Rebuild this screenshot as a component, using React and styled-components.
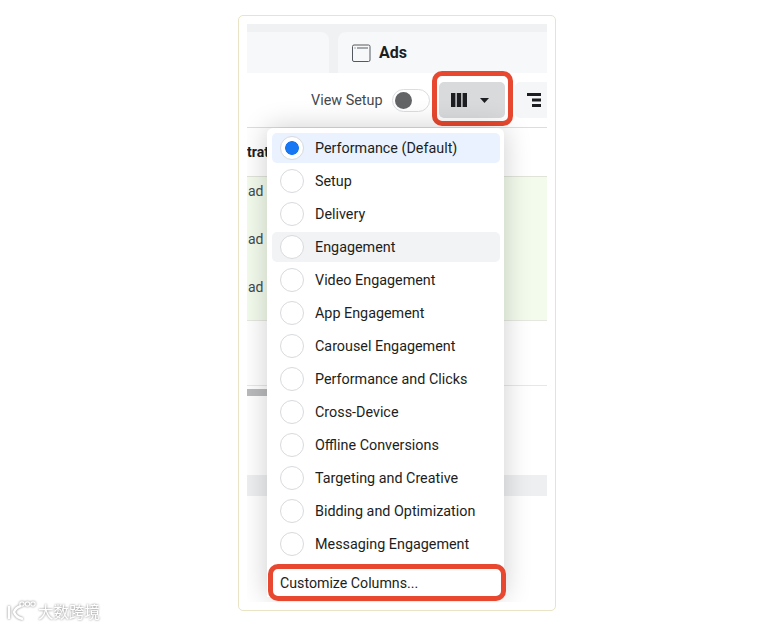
import React from 'react';
import styled, { createGlobalStyle } from 'styled-components';

const ITEMS = [
  'Performance (Default)',
  'Setup',
  'Delivery',
  'Engagement',
  'Video Engagement',
  'App Engagement',
  'Carousel Engagement',
  'Performance and Clicks',
  'Cross-Device',
  'Offline Conversions',
  'Targeting and Creative',
  'Bidding and Optimization',
  'Messaging Engagement',
];

const App = () => {
  return (
    <Page>
      <GlobalStyle />
      <Frame>
        <Screen>
          <TabBar>
            <Tab $width={82} />
            <Tab $grow>
              <svg width="20" height="20" viewBox="0 0 20 20" fill="none">
                <rect x="1.5" y="2" width="17.5" height="16.5" rx="1.5" stroke="#55595f" strokeWidth="1" />
                <path d="M3.5 5h1M6 5h11" stroke="#55595f" strokeWidth="1" />
              </svg>
              <TabLabel>Ads</TabLabel>
            </Tab>
          </TabBar>
          <Toolbar>
            <ToggleLabel>View Setup</ToggleLabel>
            <Toggle>
              <Knob />
            </Toggle>
            <ColumnsButton>
              <svg width="16" height="14" viewBox="0 0 16 14" fill="#1c1e21">
                <rect x="0" y="0" width="4.4" height="14" />
                <rect x="5.8" y="0" width="4.4" height="14" />
                <rect x="11.6" y="0" width="4.4" height="14" />
              </svg>
              <svg width="9" height="5" viewBox="0 0 9 5" fill="#1c1e21">
                <path d="M0 0h9L4.5 5z" />
              </svg>
            </ColumnsButton>
            <BreakdownButton>
              <svg width="14" height="14" viewBox="0 0 14 14" fill="#1c1e21">
                <rect x="0" y="0" width="14" height="3" />
                <rect x="5" y="5.5" width="9" height="3" />
                <rect x="5" y="11" width="9" height="3" />
              </svg>
            </BreakdownButton>
          </Toolbar>
          <TableHead>
            <HeadText>trat</HeadText>
          </TableHead>
          <GreenRows>
            <CellText>ad</CellText>
            <CellText>ad</CellText>
            <CellText>ad</CellText>
          </GreenRows>
          <Spacer $height={64} />
          <ScrollTrack>
            <ScrollThumb />
          </ScrollTrack>
          <Spacer $height={79} />
          <FooterBand />
          <Menu>
            {ITEMS.map((v, i) => (
              <MenuItem key={i} $selected={i === 0} $hover={i === 3}>
                <Radio $checked={i === 0} />
                <span>{v}</span>
              </MenuItem>
            ))}
            <Customize>Customize Columns...</Customize>
          </Menu>
        </Screen>
      </Frame>
      <Watermark>
        <svg width="32" height="24" viewBox="0 0 32 24" fill="none" stroke="#fff" strokeWidth="2.4">
          <path d="M3 7v13" />
          <path d="M15 7c-4 1-6 3-7 6 1 3 4 6 9 7" />
          <g strokeWidth="1.2">
            <circle cx="16" cy="5" r="2.2" />
            <circle cx="21.5" cy="5" r="2.2" />
            <circle cx="27" cy="5" r="2.2" />
          </g>
        </svg>
        <WatermarkText>大数跨境</WatermarkText>
      </Watermark>
    </Page>
  );
};

export default App;

const GlobalStyle = createGlobalStyle`
  body {
    margin: 0;
    background: #fff;
    font-family: Roboto, "Liberation Sans", sans-serif;
  }
`;
const Page = styled.div`
  position: relative;
  width: 773px;
  height: 627px;
  padding: 15px 0 0 238px;
  box-sizing: border-box;
  overflow: hidden;
`;
const Frame = styled.div`
  box-sizing: border-box;
  width: 318px;
  height: 596px;
  padding: 8px 8px 8px;
  border: 1px solid #e9e4c6;
  border-radius: 5px;
`;
const Screen = styled.div`
  position: relative;
  display: flex;
  flex-direction: column;
  width: 300px;
  height: 578px;
  overflow: hidden;
  background: #fff;
`;
const TabBar = styled.div`
  display: flex;
  gap: 9px;
  height: 49px;
  flex: none;
  padding-top: 8px;
  box-sizing: border-box;
  background: #f0f1f3;
`;
const Tab = styled.div`
  display: flex;
  align-items: center;
  gap: 8px;
  padding-left: 13px;
  box-sizing: border-box;
  background: #f7f8fa;
  width: ${(p) => (p.$width ? `${p.$width}px` : 'auto')};
  flex-grow: ${(p) => (p.$grow ? 1 : 0)};
  border-radius: ${(p) => (p.$grow ? '8px 0 0 0' : '0 8px 0 0')};
`;
const TabLabel = styled.span`
  font-size: 16px;
  font-weight: 700;
  color: #1c1e21;
`;
const Toolbar = styled.div`
  display: flex;
  align-items: center;
  height: 55px;
  flex: none;
  box-sizing: border-box;
  border-bottom: 1px solid #dadde1;
`;
const ToggleLabel = styled.span`
  margin-left: 64px;
  width: 72px;
  font-size: 14.4px;
  color: #444950;
  white-space: nowrap;
`;
const Toggle = styled.div`
  display: flex;
  align-items: center;
  margin-left: 9px;
  width: 38px;
  height: 23px;
  padding-left: 2px;
  box-sizing: border-box;
  border: 1px solid #dadde1;
  border-radius: 12px;
  background: #fff;
`;
const Knob = styled.div`
  width: 17px;
  height: 17px;
  border-radius: 50%;
  background: #636466;
`;
const ColumnsButton = styled.div`
  position: relative;
  display: flex;
  align-items: center;
  justify-content: center;
  gap: 13px;
  flex: none;
  margin-left: 9px;
  width: 66px;
  height: 36px;
  padding-right: 4px;
  box-sizing: border-box;
  border-radius: 5px;
  background: #d9dadc;

  &::after {
    content: '';
    position: absolute;
    inset: -11px -8px -8px -7px;
    border: 5px solid #e8482f;
    border-radius: 10px;
  }
`;
const BreakdownButton = styled.div`
  display: flex;
  align-items: center;
  flex: none;
  margin-left: 10px;
  padding-left: 12px;
  width: 32px;
  height: 36px;
  box-sizing: border-box;
  border-radius: 5px 0 0 5px;
  background: #f5f6f7;
`;
const TableHead = styled.div`
  display: flex;
  align-items: center;
  height: 49px;
  flex: none;
  border-bottom: 1px solid #dfe3d8;
  box-sizing: border-box;
`;
const HeadText = styled.span`
  font-size: 14px;
  font-weight: 700;
  color: #1c1e21;
  white-space: nowrap;
`;
const GreenRows = styled.div`
  display: flex;
  flex-direction: column;
  gap: 27px;
  height: 144px;
  flex: none;
  padding: 4px 0 0 1px;
  box-sizing: border-box;
  background: #f2fbec;
  border-bottom: 1px solid #e4e8e0;
`;
const CellText = styled.span`
  font-size: 14px;
  line-height: 21px;
  color: #444950;
`;
const Spacer = styled.div`
  height: ${(p) => p.$height}px;
  flex: none;
`;
const ScrollTrack = styled.div`
  height: 11px;
  flex: none;
  padding-top: 3px;
  box-sizing: border-box;
  border-top: 1px solid #e6e7e9;
`;
const ScrollThumb = styled.div`
  width: 100px;
  height: 7px;
  background: #b9babc;
`;
const FooterBand = styled.div`
  height: 21px;
  flex: none;
  background: #eeeff0;
`;
const Menu = styled.div`
  position: absolute;
  top: 104px;
  left: 20px;
  bottom: 5px;
  display: flex;
  flex-direction: column;
  gap: 3px;
  width: 237px;
  padding: 5px 4px 0 5px;
  box-sizing: border-box;
  background: #fff;
  border-radius: 6px 6px 0 0;
  box-shadow: 0 0 28px rgba(0, 0, 0, 0.2);
`;
const MenuItem = styled.div`
  display: flex;
  align-items: center;
  gap: 11px;
  height: 30px;
  flex: none;
  padding-left: 8px;
  box-sizing: border-box;
  border-radius: 5px;
  font-size: 14.35px;
  color: #1c1e21;
  background: ${(p) => (p.$selected ? '#e9f2fe' : p.$hover ? '#f2f3f5' : 'transparent')};
`;
const Radio = styled.div`
  flex: none;
  width: 24px;
  height: 24px;
  box-sizing: border-box;
  border: 1px solid #d8dadd;
  border-radius: 50%;
  background: ${(p) => (p.$checked ? 'radial-gradient(circle, #1877f2 0 6.5px, #fff 7.2px)' : '#fff')};
`;
const Customize = styled.div`
  display: flex;
  align-items: center;
  flex: none;
  margin: 2px -6px 0 -4px;
  height: 37px;
  padding-left: 7px;
  box-sizing: border-box;
  border: 5px solid #e8482f;
  border-radius: 10px;
  background: #fff;
  font-size: 14.2px;
  color: #1c1e21;
`;
const Watermark = styled.div`
  position: absolute;
  left: 6px;
  top: 599px;
  display: flex;
  align-items: center;
  filter: drop-shadow(0 0 1px #808080);
`;
const WatermarkText = styled.span`
  font-family: "Noto Sans CJK SC", sans-serif;
  font-size: 15.5px;
  color: #fff;
`;
